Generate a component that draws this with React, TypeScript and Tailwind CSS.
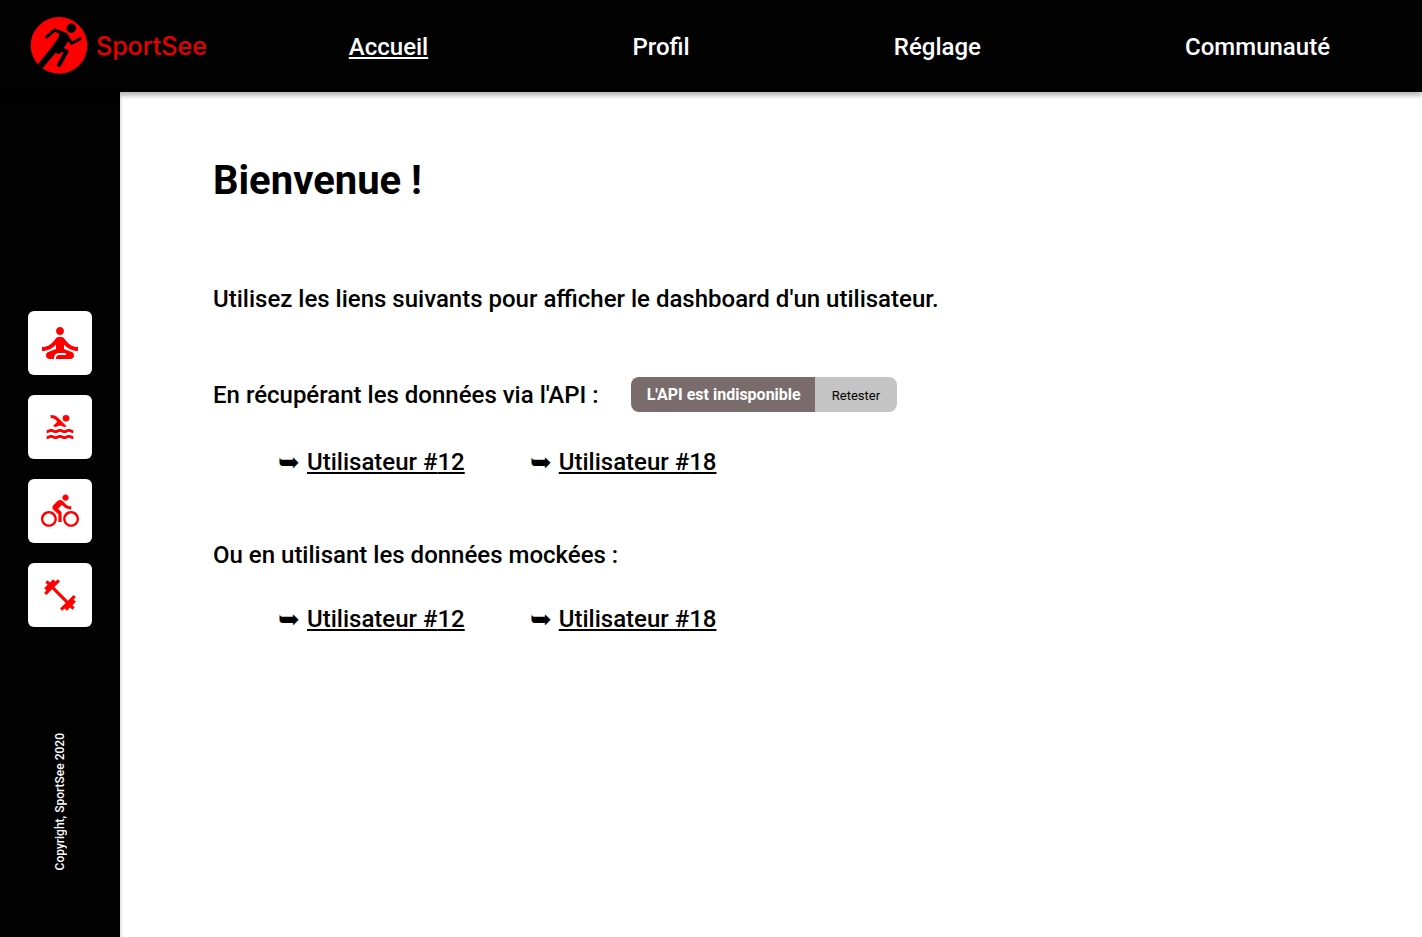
import React from "react";
import { MdPool, MdDirectionsBike, MdFitnessCenter } from "react-icons/md";

const navItems = ["Accueil", "Profil", "Réglage", "Communauté"];

function MeditationIcon() {
  return (
    <svg viewBox="0 0 24 24" className="size-12" fill="currentColor" aria-hidden="true">
      <path d="M12 4C13.11 4 14 4.89 14 6C14 7.11 13.11 8 12 8C10.9 8 10 7.11 10 6C10 4.9 10.9 4 12 4M21 16V14C18.76 14 16.84 13.04 15.4 11.32L14.06 9.72C13.68 9.26 13.12 9 12.53 9H11.5C10.89 9 10.33 9.26 9.95 9.72L8.61 11.32C7.16 13.04 5.24 14 3 14V16C5.77 16 8.19 14.83 10 12.75V15L6.12 16.55C5.45 16.82 5 17.5 5 18.21C5 19.2 5.8 20 6.79 20H9V19.5C9 18.12 10.12 17 11.5 17H14.5C14.78 17 15 17.22 15 17.5C15 17.78 14.78 18 14.5 18H11.5C10.67 18 10 18.67 10 19.5V20H17.21C18.2 20 19 19.2 19 18.21C19 17.5 18.55 16.82 17.88 16.55L14 15V12.75C15.81 14.83 18.23 16 21 16Z" />
    </svg>
  );
}

const activities = [
  { label: "Méditation", icon: <MeditationIcon /> },
  { label: "Natation", icon: <MdPool className="size-8" /> },
  { label: "Vélo", icon: <MdDirectionsBike className="size-[38px]" /> },
  { label: "Musculation", icon: <MdFitnessCenter className="size-[38px]" /> },
];

function Logo() {
  return (
    <a href="#accueil" className="flex items-center gap-2">
      <svg viewBox="0 0 58 58" className="size-[58px]" aria-hidden="true">
        <defs>
          <clipPath id="disc">
            <circle cx="29" cy="28.4" r="28.3" />
          </clipPath>
        </defs>
        <circle cx="29" cy="28.4" r="28.3" fill="#ff0000" />
        <g clipPath="url(#disc)">
          <circle cx="41.3" cy="11.2" r="4.8" />
          <path d="M29.5 16L38 18.5L38.5 24L33.5 31.5L30 37L25.5 36L11 53L5.5 50L21 31L28.5 20.5Z" />
          <g fill="none" stroke="#000" strokeLinecap="round" strokeLinejoin="round">
            <path d="M16.5 20L24.8 13L36 17.5" strokeWidth="3" />
            <path d="M37 19L41.5 26.5L50 21.8" strokeWidth="3" />
            <path d="M29 31.5L36.5 34.5L29 48" strokeWidth="4.2" />
          </g>
        </g>
      </svg>
      <span className="font-['Inter',sans-serif] text-[25px] leading-8 text-[#e60000]">SportSee</span>
    </a>
  );
}

function UserLinks({ source }: { source: string }) {
  return (
    <ul className="flex gap-[65px] pl-[65px]">
      {[12, 18].map((id) => (
        <li key={id} className="flex items-center gap-[7px]">
          <span aria-hidden="true" className="text-[26px] leading-8">
            ➥
          </span>
          <a href={`#${source}-${id}`} className="underline">
            Utilisateur #{id}
          </a>
        </li>
      ))}
    </ul>
  );
}

export default function App() {
  return (
    <div className="flex min-h-screen flex-col bg-white font-['Roboto',sans-serif] font-medium text-black">
      <header className="relative z-10 flex h-[92px] items-center gap-[142px] bg-[#020203] pr-[92px] pl-[30px] shadow-[0_4px_4px_rgba(0,0,0,0.25)]">
        <Logo />
        <nav className="flex-1 pt-0.5">
          <ul className="flex justify-between text-2xl text-white">
            {navItems.map((item, i) => (
              <li key={item}>
                <a href={"#" + item} className={i === 0 ? "underline" : ""}>
                  {item}
                </a>
              </li>
            ))}
          </ul>
        </nav>
      </header>
      <div className="flex flex-1">
        <aside className="flex w-[120px] shrink-0 flex-col items-center justify-between bg-[#020203] pt-[219px] pb-[67px] shadow-[0_4px_4px_rgba(0,0,0,0.25)]">
          <div className="flex flex-col gap-5">
            {activities.map(({ label, icon }) => (
              <button
                key={label}
                type="button"
                aria-label={label}
                className="flex size-16 items-center justify-center rounded-md bg-white text-[#ff0000]"
              >
                {icon}
              </button>
            ))}
          </div>
          <p className="rotate-180 text-xs text-white [writing-mode:vertical-rl]">Copyright, SportSee 2020</p>
        </aside>
        <main className="flex-1 pt-[65px] pl-[93px] text-2xl">
          <h1 className="text-[40px] leading-12 font-bold">Bienvenue !</h1>
          <p className="mt-[78px]">Utilisez les liens suivants pour afficher le dashboard d'un utilisateur.</p>
          <section>
            <div className="mt-[62px] mb-[34px] flex items-center gap-8">
              <h2>En récupérant les données via l'API :</h2>
              <div className="flex h-[35px] overflow-hidden rounded-lg">
                <span className="flex items-center bg-[#7a6c6c] pr-[14px] pl-4 text-base font-bold text-white">
                  L'API est indisponible
                </span>
                <button type="button" className="bg-[#c4c4c4] px-[17px] pt-0.5 text-[13px] font-normal">
                  Retester
                </button>
              </div>
            </div>
            <UserLinks source="api" />
          </section>
          <section>
            <h2 className="mt-[61px] mb-8">Ou en utilisant les données mockées :</h2>
            <UserLinks source="mock" />
          </section>
        </main>
      </div>
    </div>
  );
}
